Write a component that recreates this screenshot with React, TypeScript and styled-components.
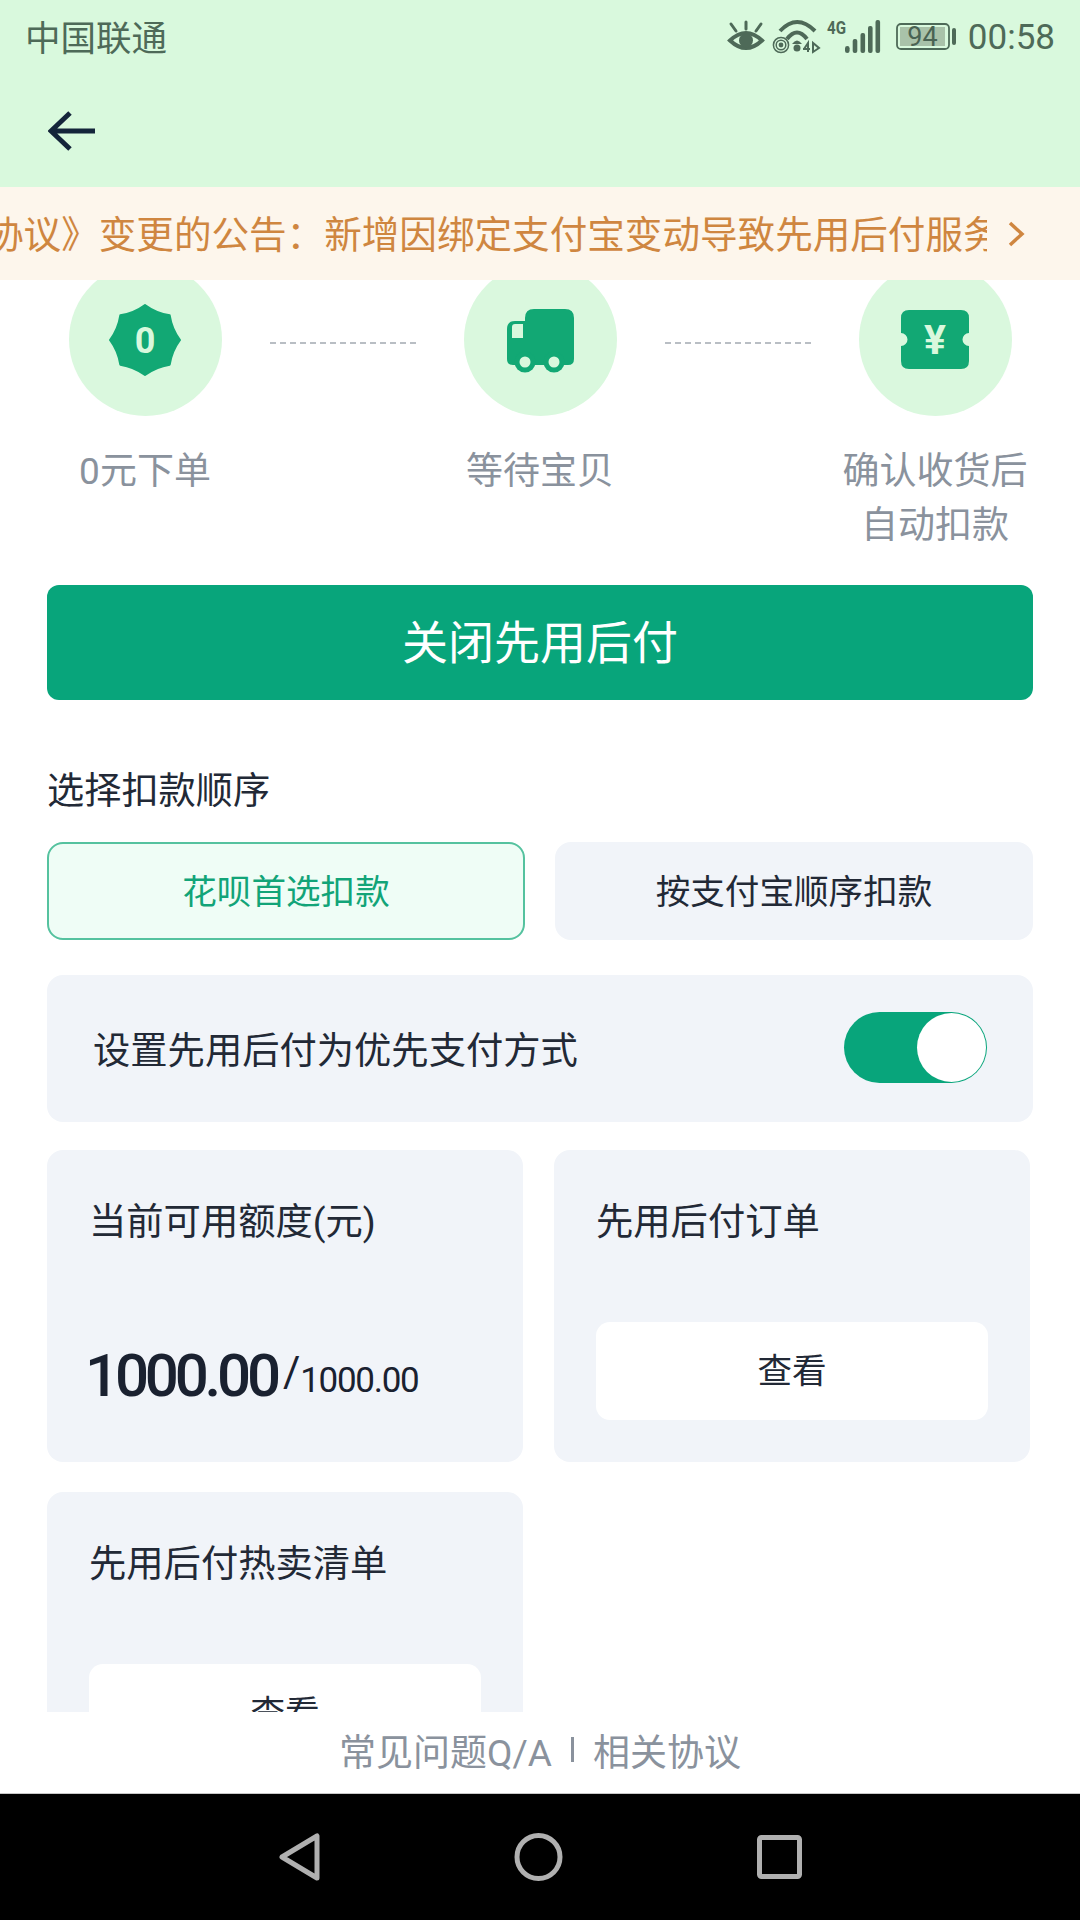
import React from 'react';
import styled, { createGlobalStyle } from 'styled-components';

const GlobalStyle = createGlobalStyle`
  html, body {
    margin: 0;
    padding: 0;
    background: #fff;
  }
  * {
    box-sizing: border-box;
  }
  body {
    font-family: Roboto, "Noto Sans CJK SC", sans-serif;
  }
`;

const Page = styled.div`
  width: 1080px;
  height: 1920px;
  display: flex;
  flex-direction: column;
  overflow: hidden;
  background: #fff;
  color: #222936;
`;

const Header = styled.header`
  height: 187px;
  flex: none;
  background: #d9f9dd;
`;

const StatusBar = styled.div`
  height: 75px;
  padding: 0 25px;
  display: flex;
  align-items: center;
  justify-content: space-between;
  color: #4e6a58;
`;

const Carrier = styled.span`
  margin-top: 3px;
  font-size: 35.5px;
  line-height: 44px;
`;

const StatusIcons = styled.div`
  display: flex;
  align-items: center;
`;

const StatusIcon = styled.svg<{ $gap?: number }>`
  margin-left: ${(p) => p.$gap ?? 0}px;
  margin-bottom: 3px;
  overflow: visible;
`;

const Clock = styled.span`
  margin-left: 12px;
  font-size: 35px;
  line-height: 44px;
`;

const NavBar = styled.div`
  height: 112px;
  padding-left: 48px;
  display: flex;
  align-items: center;
`;

const Notice = styled.div`
  height: 93px;
  flex: none;
  display: flex;
  align-items: center;
  background: #fdf6ec;
  color: #cf8640;
`;

const NoticeTrack = styled.div`
  width: 987px;
  padding-top: 3px;
  overflow: hidden;
`;

const NoticeText = styled.div`
  margin-left: -14px;
  white-space: nowrap;
  font-size: 37.6px;
  line-height: 50px;
`;

const NoticeArrow = styled.svg`
  margin-left: 20px;
`;

const Content = styled.main`
  flex: 1;
  min-height: 0;
  overflow: hidden;
  padding: 0 47px;
`;

const Steps = styled.div`
  margin-top: -17px;
  padding: 0 5px;
  display: grid;
  grid-template-columns: 186px 1fr 186px 1fr 186px;
`;

const Step = styled.div`
  display: flex;
  flex-direction: column;
  align-items: center;
`;

const StepCircle = styled.div`
  width: 153px;
  height: 153px;
  border-radius: 50%;
  background: #daf8de;
  display: flex;
  align-items: center;
  justify-content: center;
`;

const StepLabel = styled.div`
  margin-top: 29px;
  font-size: 37px;
  line-height: 54px;
  text-align: center;
  color: #8a929d;
`;

const StepLine = styled.div`
  width: 146px;
  height: 0;
  margin: 79px auto 0;
  border-top: 2px dashed #b9bec4;
`;

const PrimaryButton = styled.div`
  height: 115px;
  margin-top: 32px;
  border-radius: 12px;
  background: #08a57b;
  color: #fff;
  font-size: 46px;
  line-height: 116px;
  text-align: center;
`;

const SectionTitle = styled.div`
  margin-top: 66px;
  font-size: 37.2px;
  line-height: 51px;
`;

const Options = styled.div`
  margin-top: 25px;
  display: grid;
  grid-template-columns: 478px 478px;
  column-gap: 30px;
`;

const Option = styled.div<{ $active?: boolean }>`
  height: 98px;
  border-radius: 16px;
  border: 2px solid ${(p) => (p.$active ? '#55c29f' : '#f1f4f9')};
  background: ${(p) => (p.$active ? '#effdf6' : '#f1f4f9')};
  color: ${(p) => (p.$active ? '#12a478' : '#222936')};
  font-size: 34.6px;
  line-height: 96px;
  text-align: center;
`;

const SettingRow = styled.div`
  height: 147px;
  margin-top: 35px;
  padding: 0 46px 2px 46px;
  border-radius: 16px;
  background: #f1f4f9;
  display: flex;
  align-items: center;
  justify-content: space-between;
  font-size: 37.3px;
`;

const Toggle = styled.div`
  width: 143px;
  height: 71px;
  padding: 1px;
  border-radius: 36px;
  background: #08a57b;
  display: flex;
  justify-content: flex-end;
`;

const ToggleKnob = styled.div`
  width: 69px;
  height: 69px;
  border-radius: 50%;
  background: #fff;
`;

const Cards = styled.div`
  margin-top: 28px;
  display: grid;
  grid-template-columns: 476px 476px;
  column-gap: 31px;
  row-gap: 30px;
`;

const Card = styled.div`
  height: 312px;
  padding: 47px 42px 0;
  border-radius: 16px;
  background: #f1f4f9;
`;

const CardTitle = styled.div`
  font-size: 37.3px;
  line-height: 51px;
`;

const Amount = styled.div`
  margin: 93px 0 0 -4px;
  display: flex;
  align-items: flex-end;
  color: #1a2130;
`;

const AmountMain = styled.span`
  font-size: 60px;
  font-weight: 500;
  line-height: 70px;
  letter-spacing: -4.2px;
`;

const AmountSlash = styled.span`
  margin: 0 0 14px 6px;
  font-size: 42px;
  line-height: 50px;
`;

const AmountTotal = styled.span`
  margin: 0 0 10px;
  font-size: 35px;
  line-height: 40px;
  letter-spacing: -1.3px;
`;

const ViewButton = styled.div`
  height: 98px;
  margin-top: 74px;
  border-radius: 14px;
  background: #fff;
  font-size: 34.6px;
  line-height: 98px;
  text-align: center;
`;

const Footer = styled.footer`
  height: 82px;
  flex: none;
  padding-bottom: 6px;
  background: #fff;
  border-bottom: 1px solid #c8c8c8;
  display: flex;
  align-items: center;
  justify-content: center;
  gap: 19px;
  color: #8a929d;
  font-size: 37px;
`;

const FooterDivider = styled.span`
  width: 3px;
  height: 25px;
  background: #8a929d;
`;

const SystemNav = styled.nav`
  height: 126px;
  flex: none;
  background: #000;
  display: flex;
  align-items: center;
  justify-content: center;
  gap: 194px;
`;

const statusColor = '#4e6a58';
const iconGreen = '#12a874';
const iconLight = '#d9f8dd';

const EyeIcon = () => (
  <StatusIcon width="36" height="30" viewBox="0 0 36 30">
    <path d="M2 19.5 Q18 4.5 34 19.5 Q18 34.5 2 19.5Z" fill="none" stroke={statusColor} strokeWidth="4" />
    <circle cx="18" cy="19.5" r="7" fill={statusColor} />
    <path d="M18 1 V8 M3 3 L8 10 M33 3 L28 10" stroke={statusColor} strokeWidth="3" strokeLinecap="round" />
  </StatusIcon>
);

const WifiIcon = () => (
  <StatusIcon $gap={9} width="47" height="32" viewBox="0 0 47 32">
    <path d="M7 11 Q24 -7 42 11" fill="none" stroke={statusColor} strokeWidth="4" />
    <path d="M14 19 Q24 6 34 19" fill="none" stroke={statusColor} strokeWidth="4" />
    <path d="M19 24 Q24 17 29 24Z" fill={statusColor} />
    <circle cx="24" cy="28" r="3.5" fill={statusColor} />
    <circle cx="8" cy="25" r="2.4" fill={statusColor} />
    <circle cx="8" cy="25" r="4.8" fill="none" stroke={statusColor} strokeWidth="1.5" />
    <circle cx="8" cy="25" r="7.6" fill="none" stroke={statusColor} strokeWidth="1.5" />
    <path d="M31 29 L35 23 V32 M30 29 H37 M40 23 V32 L46 28Z" fill="none" stroke={statusColor} strokeWidth="2" />
  </StatusIcon>
);

const SignalIcon = () => (
  <StatusIcon $gap={7} width="54" height="33" viewBox="0 0 54 33">
    <text
      x="0"
      y="14"
      fontFamily="Roboto, sans-serif"
      fontSize="18"
      fontWeight="700"
      fill={statusColor}
      textLength="19"
      lengthAdjust="spacingAndGlyphs"
    >
      4G
    </text>
    <rect x="18" y="26" width="4.6" height="7" rx="2.3" fill={statusColor} />
    <rect x="25.7" y="19" width="4.6" height="14" rx="2" fill={statusColor} />
    <rect x="33.5" y="13" width="4.6" height="20" rx="2" fill={statusColor} />
    <rect x="41" y="6" width="4.6" height="27" rx="2" fill={statusColor} />
    <rect x="48.5" y="0" width="4.6" height="33" rx="2" fill={statusColor} />
  </StatusIcon>
);

const BatteryIcon = () => (
  <StatusIcon $gap={15} width="60" height="27" viewBox="0 0 60 27">
    <rect x="1" y="1" width="52" height="25" rx="4" fill="none" stroke={statusColor} strokeWidth="1.8" />
    <rect x="4" y="4" width="45" height="19" fill="#a9c2a9" />
    <rect x="56" y="5" width="4" height="17" rx="2" fill={statusColor} />
    <text x="26.5" y="23" textAnchor="middle" fontFamily="Roboto, sans-serif" fontSize="27" fill="#4a6353">
      94
    </text>
  </StatusIcon>
);

const BadgeIcon = () => (
  <svg width="72" height="72" viewBox="0 0 72 72">
    <path
      d="M36 1 Q47.1 9.2 60.7 11.3 Q62.8 24.9 71 36 Q62.8 47.1 60.7 60.7 Q47.1 62.8 36 71 Q24.9 62.8 11.3 60.7 Q9.2 47.1 1 36 Q9.2 24.9 11.3 11.3 Q24.9 9.2 36 1Z"
      fill={iconGreen}
      stroke={iconGreen}
      strokeWidth="2"
      strokeLinejoin="round"
    />
    <text x="36" y="49" textAnchor="middle" fontFamily="Roboto, sans-serif" fontSize="36" fontWeight="700" fill={iconLight}>
      0
    </text>
  </svg>
);

const TruckIcon = () => (
  <svg width="67" height="66" viewBox="0 -2 67 66">
    <path
      d="M18 9 Q18 0 27 0 H58 Q67 0 67 9 V50 Q67 56 61 56 H6 Q0 56 0 50 V20 Q0 12 8 12 H18Z"
      fill={iconGreen}
    />
    <path d="M5 18 Q5 15 8 15 H16 V29 H5Z" fill={iconLight} />
    <circle cx="18" cy="53" r="10.5" fill={iconGreen} />
    <circle cx="18" cy="53" r="5.5" fill={iconLight} />
    <circle cx="47" cy="53" r="10.5" fill={iconGreen} />
    <circle cx="47" cy="53" r="5.5" fill={iconLight} />
  </svg>
);

const TicketIcon = () => (
  <svg width="68" height="59" viewBox="0 0 68 59">
    <path
      d="M8 0 H60 Q68 0 68 8 V23 A6.5 6.5 0 0 0 68 36 V51 Q68 59 60 59 H8 Q0 59 0 51 V36 A6.5 6.5 0 0 0 0 23 V8 Q0 0 8 0Z"
      fill={iconGreen}
    />
    <text x="34" y="44" textAnchor="middle" fontFamily="Roboto, sans-serif" fontSize="41" fontWeight="700" fill={iconLight}>
      ¥
    </text>
  </svg>
);

const App = () => (
  <Page>
    <GlobalStyle />
    <Header>
      <StatusBar>
        <Carrier>中国联通</Carrier>
        <StatusIcons>
          <EyeIcon />
          <WifiIcon />
          <SignalIcon />
          <BatteryIcon />
          <Clock>00:58</Clock>
        </StatusIcons>
      </StatusBar>
      <NavBar>
        <svg width="48" height="40" viewBox="0 0 48 40">
          <path d="M22 2 L3 20 L22 38 M3 20 H47" fill="none" stroke="#14253a" strokeWidth="5" />
        </svg>
      </NavBar>
    </Header>
    <Notice>
      <NoticeTrack>
        <NoticeText>协议》变更的公告：新增因绑定支付宝变动导致先用后付服务条款</NoticeText>
      </NoticeTrack>
      <NoticeArrow width="18" height="26" viewBox="0 0 18 26">
        <path d="M3 2 L15 13 L3 24" fill="none" stroke="#cf8640" strokeWidth="3.5" />
      </NoticeArrow>
    </Notice>
    <Content>
      <Steps>
        <Step>
          <StepCircle>
            <BadgeIcon />
          </StepCircle>
          <StepLabel>0元下单</StepLabel>
        </Step>
        <StepLine />
        <Step>
          <StepCircle>
            <TruckIcon />
          </StepCircle>
          <StepLabel>等待宝贝</StepLabel>
        </Step>
        <StepLine />
        <Step>
          <StepCircle>
            <TicketIcon />
          </StepCircle>
          <StepLabel>
            确认收货后
            <br />
            自动扣款
          </StepLabel>
        </Step>
      </Steps>
      <PrimaryButton>关闭先用后付</PrimaryButton>
      <SectionTitle>选择扣款顺序</SectionTitle>
      <Options>
        <Option $active>花呗首选扣款</Option>
        <Option>按支付宝顺序扣款</Option>
      </Options>
      <SettingRow>
        设置先用后付为优先支付方式
        <Toggle>
          <ToggleKnob />
        </Toggle>
      </SettingRow>
      <Cards>
        <Card>
          <CardTitle>当前可用额度(元)</CardTitle>
          <Amount>
            <AmountMain>1000.00</AmountMain>
            <AmountSlash>/</AmountSlash>
            <AmountTotal>1000.00</AmountTotal>
          </Amount>
        </Card>
        <Card>
          <CardTitle>先用后付订单</CardTitle>
          <ViewButton>查看</ViewButton>
        </Card>
        <Card>
          <CardTitle>先用后付热卖清单</CardTitle>
          <ViewButton>查看</ViewButton>
        </Card>
      </Cards>
    </Content>
    <Footer>
      <span>常见问题Q/A</span>
      <FooterDivider />
      <span>相关协议</span>
    </Footer>
    <SystemNav>
      <svg width="41" height="48" viewBox="0 0 41 48">
        <path d="M38 3 V45 L3 24Z" fill="none" stroke="#b0b0b0" strokeWidth="5" strokeLinejoin="round" />
      </svg>
      <svg width="49" height="48" viewBox="0 0 49 48">
        <circle cx="24.5" cy="24" r="21.5" fill="none" stroke="#b0b0b0" strokeWidth="5" />
      </svg>
      <svg width="45" height="44" viewBox="0 0 45 44">
        <rect x="2.5" y="2.5" width="40" height="39" rx="2" fill="none" stroke="#b0b0b0" strokeWidth="5" />
      </svg>
    </SystemNav>
  </Page>
);

export default App;
